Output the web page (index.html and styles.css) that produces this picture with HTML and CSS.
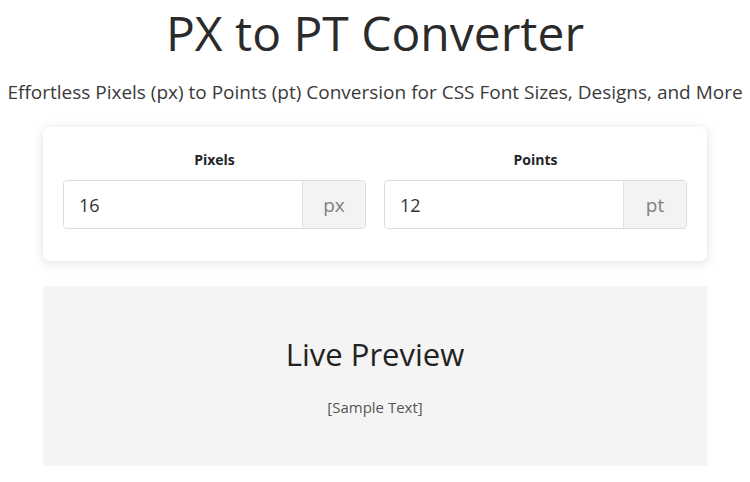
FILE: index.html
```html
<!DOCTYPE html>
<html lang="en">
<head>
    <meta charset="UTF-8">
    <title>PX to PT Converter</title>
    <link rel="stylesheet" href="styles.css">
</head>
<body>
    <h1 class="title">PX to PT Converter</h1>
    <p class="subtitle">Effortless Pixels (px) to Points (pt) Conversion for CSS Font Sizes, Designs, and More</p>

    <div class="container">
        <div class="converter-card">
            <div class="field">
                <label for="px">Pixels</label>
                <div class="input-group">
                    <input id="px" type="text" value="16">
                    <span class="unit">px</span>
                </div>
            </div>
            <div class="field">
                <label for="pt">Points</label>
                <div class="input-group">
                    <input id="pt" type="text" value="12">
                    <span class="unit">pt</span>
                </div>
            </div>
        </div>

        <div class="preview">
            <h2>Live Preview</h2>
            <p class="sample">[Sample Text]</p>
        </div>
    </div>
</body>
</html>
```

FILE: styles.css
```css
body {
    margin: 0;
    background: #fff;
    color: #212529;
    font-family: 'Open Sans', 'Noto Sans', sans-serif;
}

.title {
    margin: 0;
    text-align: center;
    font-size: 48px;
    font-weight: 500;
    line-height: 66px;
    color: #2b2b2b;
}

.subtitle {
    margin: 13px 0 0;
    text-align: center;
    font-size: 19px;
    line-height: 26px;
    color: #3a3a3a;
    white-space: nowrap;
}

.container {
    width: 664px;
    margin: 0 auto;
}

.converter-card {
    margin-top: 22px;
    background: #fff;
    border-radius: 7px;
    box-shadow: 0 2px 12px rgba(0,0,0,0.12);
    padding: 21px 20px 32px;
    display: grid;
    grid-template-columns: minmax(0, 1fr) minmax(0, 1fr);
    gap: 18px;
}

.field label {
    display: block;
    text-align: center;
    font-size: 14px;
    font-weight: 700;
    line-height: 24px;
    margin-bottom: 8px;
    color: #212529;
}

.input-group {
    display: flex;
    box-sizing: border-box;
    height: 49px;
    border: 1px solid #dcdcdc;
    border-radius: 4px;
    overflow: hidden;
}

.input-group input {
    flex: 1;
    width: 100%;
    min-width: 0;
    border: none;
    padding: 0 15px;
    font-family: inherit;
    font-size: 18px;
    color: #333;
    background: #fff;
    outline: none;
}

.unit {
    width: 62px;
    flex: none;
    display: flex;
    align-items: center;
    justify-content: center;
    background: #f3f3f3;
    border-left: 1px solid #e2e2e2;
    font-size: 19px;
    color: #808080;
}

.preview {
    box-sizing: border-box;
    margin-top: 25px;
    height: 180px;
    padding-top: 48px;
    background: #f4f4f4;
    text-align: center;
}

.preview h2 {
    margin: 0;
    font-size: 31px;
    font-weight: 500;
    line-height: 40px;
    color: #222;
}

.sample {
    margin: 23px 0 0;
    font-size: 15px;
    line-height: 20px;
    color: #555;
}
```
